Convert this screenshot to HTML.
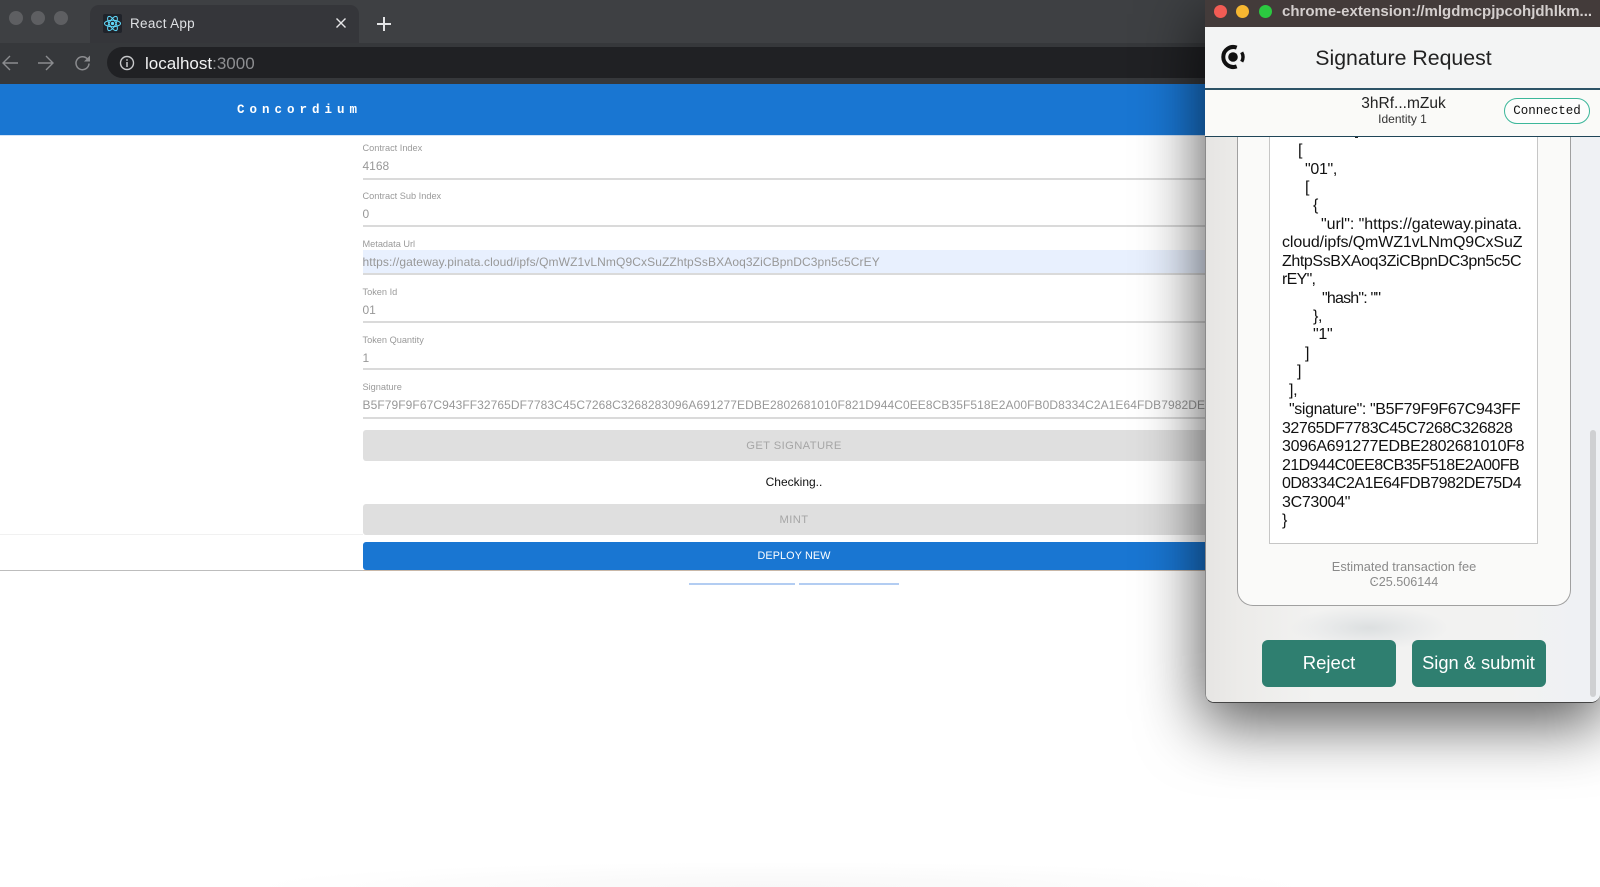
<!DOCTYPE html>
<html><head><meta charset="utf-8"><style>
html,body{margin:0;padding:0;width:1600px;height:887px;overflow:hidden;background:#fff;font-family:"Liberation Sans",sans-serif}
body{position:relative}
.a{position:absolute;white-space:nowrap}
.lb{position:absolute;left:362.5px;font-size:9.2px;color:#9a9a9a;line-height:12px}
.v{position:absolute;left:362.5px;font-size:12px;color:#989898;line-height:16px;white-space:nowrap}
.ln{position:absolute;left:362.5px;width:860px;height:1.5px;background:#dadada}
.b{position:absolute;left:362.5px;width:863px;text-align:center;font-size:11.2px;letter-spacing:.4px;border-radius:3px}
.j{position:absolute;font-size:16px;line-height:18px;color:#111;white-space:nowrap;letter-spacing:-.32px}
</style></head><body>
<div class="a" style="left:0;top:0;width:1205px;height:43px;background:#3e4043"></div>
<div class="a" style="left:0;top:43px;width:1205px;height:41px;background:#36383b"></div>
<div class="a" style="left:9px;top:11px;width:14px;height:14px;border-radius:50%;background:#5e5f62"></div>
<div class="a" style="left:31px;top:11px;width:14px;height:14px;border-radius:50%;background:#5e5f62"></div>
<div class="a" style="left:54px;top:11px;width:14px;height:14px;border-radius:50%;background:#5e5f62"></div>
<div class="a" style="left:90px;top:5px;width:269px;height:38px;background:#35363a;border-radius:9px 9px 0 0"></div>
<svg class="a" style="left:103px;top:14px" width="19" height="19" viewBox="0 0 19 19"><rect width="19" height="19" rx="2" fill="#20232a"/><g fill="none" stroke="#61dafb" stroke-width="1"><ellipse cx="9.5" cy="9.5" rx="8" ry="3.2"/><ellipse cx="9.5" cy="9.5" rx="8" ry="3.2" transform="rotate(60 9.5 9.5)"/><ellipse cx="9.5" cy="9.5" rx="8" ry="3.2" transform="rotate(120 9.5 9.5)"/></g><circle cx="9.5" cy="9.5" r="1.6" fill="#61dafb"/></svg>
<div class="a" style="left:130px;top:15px;font-size:13.5px;line-height:17px;color:#dfe1e4;letter-spacing:.3px">React App</div>
<svg class="a" style="left:335px;top:17px" width="12" height="12" viewBox="0 0 12 12"><path d="M1.5 1.5L10.5 10.5M10.5 1.5L1.5 10.5" stroke="#e6e6e8" stroke-width="1.4"/></svg>
<svg class="a" style="left:376px;top:16px" width="16" height="16" viewBox="0 0 16 16"><path d="M8 1V15M1 8H15" stroke="#e4e5e7" stroke-width="2"/></svg>
<svg class="a" style="left:1px;top:53px" width="18" height="20" viewBox="0 0 18 20"><path d="M17 10H2M9 3L2 10L9 17" fill="none" stroke="#8b8c8f" stroke-width="1.4"/></svg>
<svg class="a" style="left:37px;top:53px" width="18" height="20" viewBox="0 0 18 20"><path d="M1 10H16M9 3L16 10L9 17" fill="none" stroke="#8b8c8f" stroke-width="1.4"/></svg>
<svg class="a" style="left:74px;top:54px" width="18" height="18" viewBox="0 0 18 18"><path d="M15 9.5A6.5 6.5 0 1 1 13.2 4.7L15.5 7" fill="none" stroke="#8b8c8f" stroke-width="1.5"/><path d="M16 1.5V7.5H10Z" fill="#8b8c8f"/></svg>
<div class="a" style="left:107px;top:47px;width:1120px;height:31px;background:#202124;border-radius:16px"></div>
<svg class="a" style="left:119px;top:55px" width="16" height="16" viewBox="0 0 16 16"><circle cx="8" cy="8" r="6.5" fill="none" stroke="#c8c9cb" stroke-width="1.4"/><path d="M8 7V12M8 4.2V5.7" stroke="#c8c9cb" stroke-width="1.5"/></svg>
<div class="a" style="left:145px;top:53px;font-size:17px;line-height:20px;color:#f1f2f3;padding-top:1px">localhost<span style="color:#8d8e91">:3000</span></div>
<div class="a" style="left:0;top:84px;width:1205px;height:51px;background:#1976d2"></div>
<div class="a" style="left:0;top:135px;width:1205px;height:1px;background:#d3e3f6"></div>
<div class="a" style="left:237px;top:102px;font-family:'Liberation Mono',monospace;font-weight:bold;font-size:12.5px;line-height:16px;letter-spacing:5px;color:#fff">Concordium</div>

<div class="lb" style="top:142px">Contract Index</div><div class="v" style="top:158px">4168</div><div class="ln" style="top:178px"></div>
<div class="lb" style="top:190px">Contract Sub Index</div><div class="v" style="top:206px">0</div><div class="ln" style="top:225px"></div>
<div class="lb" style="top:238px">Metadata Url</div>
<div class="a" style="left:362.5px;top:250px;width:860px;height:24px;background:#e8f0fe"></div>
<div class="v" style="top:254px;letter-spacing:.1px">https://gateway.pinata.cloud/ipfs/QmWZ1vLNmQ9CxSuZZhtpSsBXAoq3ZiCBpnDC3pn5c5CrEY</div><div class="ln" style="top:273px"></div>
<div class="lb" style="top:286px">Token Id</div><div class="v" style="top:302px">01</div><div class="ln" style="top:321px"></div>
<div class="lb" style="top:333.5px">Token Quantity</div><div class="v" style="top:350px">1</div><div class="ln" style="top:368px"></div>
<div class="lb" style="top:381px">Signature</div><div class="v" style="top:397px;letter-spacing:.08px">B5F79F9F67C943FF32765DF7783C45C7268C3268283096A691277EDBE2802681010F821D944C0EE8CB35F518E2A00FB0D8334C2A1E64FDB7982DE75D43C73004</div><div class="ln" style="top:417px"></div>
<div class="b" style="top:430px;height:31px;line-height:32px;background:#dfdfdf;color:#a6a6a6">GET SIGNATURE</div>
<div class="a" style="left:362.5px;width:863px;text-align:center;top:473.5px;font-size:12px;line-height:16px;color:#111">Checking..</div>
<div class="a" style="left:0;top:534px;width:363px;height:1px;background:#f1f1f1"></div>
<div class="b" style="top:504px;height:31px;line-height:32px;background:#dfdfdf;color:#a6a6a6">MINT</div>
<div class="a" style="left:0;top:569.5px;width:363px;height:1px;background:#bdbdbd"></div>
<div class="b" style="top:542px;height:28px;line-height:28px;background:#1976d2;color:#fff;font-size:10.8px;letter-spacing:.12px">DEPLOY NEW</div>
<div class="a" style="left:362.5px;top:570px;width:860px;height:1px;background:#c9b8a8"></div>
<div class="a" style="left:689px;top:583px;width:106px;height:1.5px;background:#b3cdf2"></div>
<div class="a" style="left:799px;top:583px;width:100px;height:1.5px;background:#b3cdf2"></div>
<div class="a" style="left:250px;top:862px;width:1060px;height:25px;background:radial-gradient(ellipse 530px 25px at 50% 100%,#f8f8f8 0%,#fbfbfb 50%,#fff 100%)"></div>

<div class="a" style="left:1205px;top:0;width:395px;height:703px;border-radius:0 0 9px 9px;box-shadow:0 18px 62px 4px rgba(0,0,0,.64)"></div>
<div class="a" style="left:1204.5px;top:0;width:395.5px;height:703px;border-radius:0 0 9px 9px;background:#f2f2f1;border-left:1px solid #8a8a8a;border-bottom:1px solid #444;box-sizing:border-box;overflow:hidden">
<div style="position:absolute;left:0;top:137px;width:110px;height:566px;background:linear-gradient(90deg,#e6e5e3,#ecebe9 30%,#f2f2f1)"></div>
<div style="position:absolute;left:300px;top:137px;width:96px;height:566px;background:linear-gradient(90deg,#f2f2f1,#eff1f4 70%)"></div>
<div style="position:absolute;left:83px;top:606px;width:160px;height:44px;background:radial-gradient(closest-side,#dcdfe0 0%,rgba(228,230,231,.7) 50%,rgba(242,242,241,0) 100%)"></div>
</div>
<div class="a" style="left:1205px;top:0;width:395px;height:27px;background:#433b3a"></div>
<div class="a" style="left:1214px;top:5px;width:13px;height:13px;border-radius:50%;background:#f25c54"></div>
<div class="a" style="left:1236px;top:5px;width:13px;height:13px;border-radius:50%;background:#f7b731"></div>
<div class="a" style="left:1259px;top:5px;width:13px;height:13px;border-radius:50%;background:#2bc940"></div>
<div class="a" style="left:1282px;top:3px;font-size:15px;line-height:18px;font-weight:bold;color:#d4cfce">chrome-extension://mlgdmcpjpcohjdhlkm...</div>
<div class="a" style="left:1205px;top:27px;width:395px;height:62px;background:#f3f4f4"></div>
<svg class="a" style="left:1218px;top:44px" width="30" height="26" viewBox="0 0 30 26"><circle cx="15" cy="13" r="4.8" fill="#111"/><path d="M18.7 3.6A10 10 0 1 0 18.7 22.4" fill="none" stroke="#111" stroke-width="4"/><path d="M23.7 8.3A9.5 9.5 0 0 1 23.7 17.7" fill="none" stroke="#111" stroke-width="3.4"/></svg>
<div class="a" style="left:1206px;width:395px;text-align:center;top:44px;font-size:21.3px;line-height:28px;color:#222">Signature Request</div>
<div class="a" style="left:1205px;top:88px;width:395px;height:1.5px;background:#2d5366"></div>
<div class="a" style="left:1205px;top:89.5px;width:395px;height:46px;background:#fafaf8"></div>
<div class="a" style="left:1206px;width:395px;text-align:center;top:94px;font-size:15.5px;line-height:19px;color:#222">3hRf...mZuk</div>
<div class="a" style="left:1205px;width:395px;text-align:center;top:111px;font-size:12px;line-height:16px;color:#333">Identity 1</div>
<div class="a" style="left:1504px;top:98px;width:84px;height:24px;border:1.5px solid #3cb79a;border-radius:13px;background:#fdfdfc;text-align:center;font-family:'Liberation Mono',monospace;font-size:12.5px;line-height:24px;color:#111">Connected</div>
<div class="a" style="left:1205px;top:135.5px;width:395px;height:1.5px;background:#1f4558"></div>

<div class="a" style="left:1236.5px;top:137px;width:334.5px;height:469px;background:#fafaf9;border:1px solid #a0a0a0;border-top:none;border-radius:0 0 16px 16px;box-sizing:border-box"></div>
<div class="a" style="left:1269px;top:137px;width:269px;height:407px;background:#fff;border:1.5px solid #c6c6c6;border-top:none;box-sizing:border-box"></div>
<div class="a" style="left:1355px;top:136.5px;width:3px;height:1.5px;background:#222"></div>
<div class="j" style="left:1298px;top:142px">[</div>
<div class="j" style="left:1305px;top:161px">"01",</div>
<div class="j" style="left:1305px;top:179px">[</div>
<div class="j" style="left:1313px;top:197px">{</div>
<div class="j" style="left:1321px;top:216px;letter-spacing:-.06px">"url": "https://gateway.pinata.</div>
<div class="j" style="left:1282px;top:234px;letter-spacing:-.12px">cloud/ipfs/QmWZ1vLNmQ9CxSuZ</div>
<div class="j" style="left:1282px;top:253px;letter-spacing:-.4px">ZhtpSsBXAoq3ZiCBpnDC3pn5c5C</div>
<div class="j" style="left:1282px;top:271px;letter-spacing:-.7px">rEY",</div>
<div class="j" style="left:1322px;top:290px;letter-spacing:-.8px">"hash": ""</div>
<div class="j" style="left:1313px;top:308px">},</div>
<div class="j" style="left:1313px;top:326px">"1"</div>
<div class="j" style="left:1305px;top:345px">]</div>
<div class="j" style="left:1297px;top:363px">]</div>
<div class="j" style="left:1289px;top:382px">],</div>
<div class="j" style="left:1289px;top:401px;letter-spacing:-.39px">"signature": "B5F79F9F67C943FF</div>
<div class="j" style="left:1282px;top:420px;letter-spacing:-.48px">32765DF7783C45C7268C326828</div>
<div class="j" style="left:1282px;top:438px">3096A691277EDBE2802681010F8</div>
<div class="j" style="left:1282px;top:457px;letter-spacing:-.56px">21D944C0EE8CB35F518E2A00FB</div>
<div class="j" style="left:1282px;top:475px;letter-spacing:-.52px">0D8334C2A1E64FDB7982DE75D4</div>
<div class="j" style="left:1282px;top:494px">3C73004"</div>
<div class="j" style="left:1282px;top:512px">}</div>
<div class="a" style="left:1237px;width:334px;text-align:center;top:559px;font-size:12.8px;line-height:15px;color:#8a8a8a">Estimated transaction fee</div>
<div class="a" style="left:1237px;width:334px;text-align:center;top:574.5px;font-size:12.6px;line-height:15px;color:#8a8a8a">Ͼ25.506144</div>
<div class="a" style="left:1262px;top:640px;width:134px;height:47px;border-radius:6px;background:#2f7f70;color:#fff;text-align:center;font-size:18.5px;line-height:46px">Reject</div>
<div class="a" style="left:1411.5px;top:640px;width:134px;height:47px;border-radius:6px;background:#2f7f70;color:#fff;text-align:center;font-size:18.3px;line-height:46px">Sign &amp; submit</div>
<div class="a" style="left:1590px;top:430px;width:6px;height:267px;border-radius:3px;background:#cfd0d2"></div>
</body></html>
